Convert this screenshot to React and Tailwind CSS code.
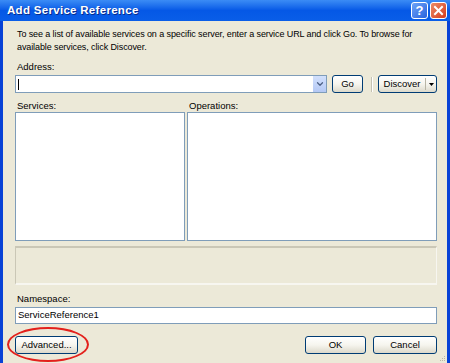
import { ChevronDown } from 'lucide-react'

function XpButton({ children, className = '' }) {
  return (
    <div className={"flex items-center justify-center border border-[#003c74] rounded-[3px] bg-gradient-to-b from-[#ffffff] via-[#f6f5ee] to-[#dcd9cb] text-black " + className}>
      {children}
    </div>
  )
}

export default function App() {
  return (
    <div className="relative w-[450px] h-[363px] flex flex-col overflow-hidden font-['Tahoma','Liberation_Sans',sans-serif] text-[9.5px] text-black">
      {/* title bar */}
      <div className="h-[21px] flex items-center pl-[7px] pr-[3px] bg-gradient-to-b from-[#3b8cf5] via-[#0558e6] to-[#0a5ee8]">
        <span className="flex-1 text-white font-bold text-[11.5px] font-['Liberation_Sans',sans-serif] tracking-[0.3px] [text-shadow:1px_1px_0_#0a2c8a]">Add Service Reference</span>
        <div className="w-[17px] h-[17px] mr-[2px] rounded-[3px] border border-white bg-gradient-to-br from-[#6ea3f7] to-[#2a62dd] flex items-center justify-center text-white font-bold text-[13px] font-['Liberation_Sans',sans-serif] leading-none">?</div>
        <div className="w-[17px] h-[17px] rounded-[3px] border border-white bg-gradient-to-br from-[#ec8a64] to-[#d4391a] flex items-center justify-center">
          <svg width="11" height="11" viewBox="0 0 11 11">
            <path d="M2 2 L9 9 M9 2 L2 9" stroke="white" strokeWidth="2" strokeLinecap="square" />
          </svg>
        </div>
      </div>

      {/* body */}
      <div className="flex-1 flex flex-col bg-[#ece9d8] border-l-[3px] border-r-[3px] border-[#0842d6] pl-[12px] pr-[10px]">
        <p className="pt-[7px] pl-[2px] leading-[13px] text-[9px] tracking-[-0.1px]">
          To see a list of available services on a specific server, enter a service URL and click Go. To browse for available services, click Discover.
        </p>

        <div className="mt-[6px] pl-[2px] leading-[13px]">Address:</div>
        <div className="mt-[2px] h-[18px] flex items-center">
          <div className="w-[312px] h-[18px] flex bg-white border border-[#7f9db9]">
            <div className="flex-1 flex items-center pl-[2px]">
              <div className="w-px h-[11px] bg-black" />
            </div>
            <div className="w-[13px] h-full bg-gradient-to-b from-[#d2e0fc] to-[#b4c8f5] flex items-center justify-center">
              <ChevronDown size={10} strokeWidth={3} className="text-[#4d6185]" />
            </div>
          </div>
          <XpButton className="ml-[5px] w-[31px] h-[18px]">Go</XpButton>
          <div className="ml-[8px] w-[2px] h-[15px] border-l border-[#c5c2b2] border-r border-r-white" />
          <div className="ml-[5px] w-[59px] h-[18px] flex border border-[#003c74] rounded-[3px] bg-gradient-to-b from-[#ffffff] via-[#f6f5ee] to-[#dcd9cb]">
            <div className="flex-1 flex items-center justify-center">Discover</div>
            <div className="w-px my-[2px] bg-[#b8b5a6]" />
            <div className="w-[10px] flex items-center justify-center">
              <svg width="5" height="3" viewBox="0 0 5 3"><path d="M0 0 H5 L2.5 3 Z" fill="black" /></svg>
            </div>
          </div>
        </div>

        <div className="mt-[6px] flex gap-[2px]">
          <div className="w-[170px] flex flex-col">
            <div className="pl-[2px] leading-[13px]">Services:</div>
            <div className="h-[129px] bg-white border border-[#7f9db9]" />
          </div>
          <div className="flex-1 flex flex-col">
            <div className="pl-[2px] leading-[13px]">Operations:</div>
            <div className="h-[129px] bg-white border border-[#7f9db9]" />
          </div>
        </div>

        <div className="mt-[5px] h-[39px] border-t-2 border-l border-[#cac7b6] border-r border-b-2 border-r-[#f7f6f0] border-b-[#f7f6f0] bg-[#ece9d8]" />

        <div className="mt-[7px] pl-[2px] leading-[13px]">Namespace:</div>
        <div className="mt-[2px] h-[17px] bg-white border border-[#7f9db9] flex items-center pl-[2px]">ServiceReference1</div>

        <div className="mt-[12px] flex items-center">
          <XpButton className="w-[63px] h-[18px]">Advanced...</XpButton>
          <div className="flex-1" />
          <XpButton className="w-[61px] h-[18px]">OK</XpButton>
          <XpButton className="ml-[7px] w-[64px] h-[18px]">Cancel</XpButton>
        </div>
      </div>

      {/* highlight ellipse */}
      <div className="absolute left-[7px] top-[327px] w-[82px] h-[35px] rounded-[50%] border-[2.5px] border-[#e3211c]" />

      {/* resize grip */}
      <svg className="absolute right-[4px] bottom-[1px]" width="6" height="6" viewBox="0 0 6 6">
        <rect x="4" y="0" width="1" height="1" fill="#b9b6a6" />
        <rect x="2" y="2" width="1" height="1" fill="#b9b6a6" />
        <rect x="4" y="2" width="1" height="1" fill="#b9b6a6" />
        <rect x="0" y="4" width="1" height="1" fill="#b9b6a6" />
        <rect x="2" y="4" width="1" height="1" fill="#b9b6a6" />
        <rect x="4" y="4" width="1" height="1" fill="#b9b6a6" />
      </svg>
    </div>
  )
}
